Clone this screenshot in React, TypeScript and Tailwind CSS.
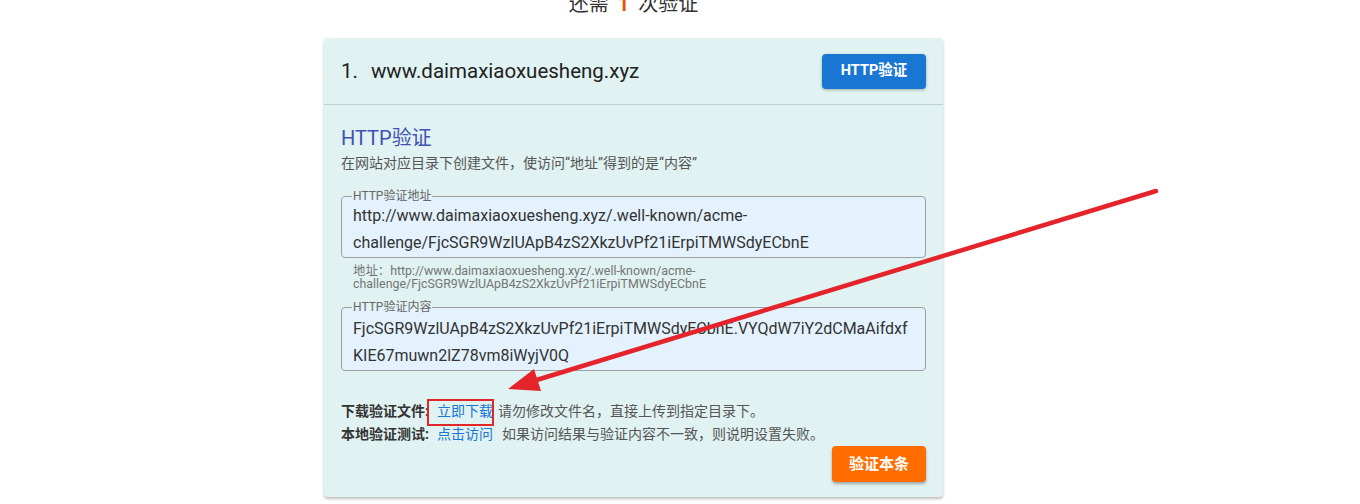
import React from "react";

const font = { fontFamily: 'Roboto, "Noto Sans CJK SC", sans-serif' };

export default function App() {
  return (
    <div className="relative w-[1360px] h-[504px] overflow-hidden bg-white text-[#333]" style={font}>
      <div className="ml-[324px] w-[619px]">
        <div className="flex h-[38px] flex-col">
          <div className="-mt-[8px] text-center text-[20px] leading-[24px] text-[#333]">
            还需 <span className="mx-[4px] font-bold text-[#e65100]">1</span> 次验证
          </div>
        </div>
        <div className="rounded-[4px] bg-[#e0f2f1] shadow-[0_2px_3px_rgba(0,0,0,0.25)]">
          <div className="flex h-[67px] items-center justify-between border-b border-[#b9d1cf] px-[17px]">
            <div className="text-[20.5px] text-[#212121]">
              1.<span className="ml-[13px]">www.daimaxiaoxuesheng.xyz</span>
            </div>
            <button className="h-[35px] w-[104px] rounded-[4px] bg-[#1976d2] text-[14.5px] font-bold text-white shadow-[0_1px_3px_rgba(0,0,0,0.3)]">
              HTTP验证
            </button>
          </div>
          <div className="px-[17px] pt-[20px] pb-[15px]">
            <div className="text-[20px] leading-[26px] text-[#3f51b5]">HTTP验证</div>
            <div className="mt-[3px] text-[14px] leading-[18px] text-[#555]">
              在网站对应目录下创建文件，使访问“地址”得到的是“内容”
            </div>
            <fieldset className="mt-[18px] rounded-[4px] border border-[#9e9e9e] bg-[#e3f2fd] px-[11px] pb-[1px]">
              <legend className="ml-[-1px] px-[1px] text-[12px] leading-[12px] text-[#666]">HTTP验证地址</legend>
              <div className="text-[16px] leading-[27px] text-[#333]">
                http://www.daimaxiaoxuesheng.xyz/.well-known/acme-<br />
                challenge/FjcSGR9WzlUApB4zS2XkzUvPf21iErpiTMWSdyECbnE
              </div>
            </fieldset>
            <div className="mt-[6px] ml-[12px] text-[12.4px] leading-[13px] text-[#757575]">
              地址：http://www.daimaxiaoxuesheng.xyz/.well-known/acme-<br />
              challenge/FjcSGR9WzlUApB4zS2XkzUvPf21iErpiTMWSdyECbnE
            </div>
            <fieldset className="mt-[11px] rounded-[4px] border border-[#9e9e9e] bg-[#e3f2fd] px-[11px] pb-[1px]">
              <legend className="ml-[-1px] px-[1px] text-[12px] leading-[12px] text-[#666]">HTTP验证内容</legend>
              <div className="mt-[2px] text-[16px] leading-[27px] text-[#333]">
                FjcSGR9WzlUApB4zS2XkzUvPf21iErpiTMWSdyECbnE.VYQdW7iY2dCMaAifdxf<br />
                KIE67muwn2lZ78vm8iWyjV0Q
              </div>
            </fieldset>
            <div className="mt-[29px] text-[14px] leading-[23px]">
              <div className="flex items-center">
                <span className="w-[91px] font-bold text-[#333]">下载验证文件:</span>
                <span className="relative ml-[5px] text-[#1976d2]">
                  立即下载
                  <span className="absolute -left-[10px] -right-[1px] -top-[1px] -bottom-[3px] border-2 border-[#e0282a]"></span>
                </span>
                <span className="ml-[5px] text-[#555]">请勿修改文件名，直接上传到指定目录下。</span>
              </div>
              <div className="flex">
                <span className="w-[91px] font-bold text-[#333]">本地验证测试:</span>
                <span className="ml-[5px] text-[#1976d2]">点击访问</span>
                <span className="ml-[9px] text-[#555]">如果访问结果与验证内容不一致，则说明设置失败。</span>
              </div>
            </div>
            <div className="flex justify-end">
              <button className="h-[36px] w-[94px] rounded-[4px] bg-[#ff6d00] text-[15px] font-bold text-white shadow-[0_2px_3px_rgba(0,0,0,0.3)]">
                验证本条
              </button>
            </div>
          </div>
        </div>
      </div>
      <svg className="pointer-events-none absolute left-0 top-0" width="1360" height="504">
        <line x1="1156" y1="191" x2="530" y2="382" stroke="#e5232b" strokeWidth="4.5" strokeLinecap="round" />
        <polygon points="508,389 534,369 541,391" fill="#e5232b" />
      </svg>
    </div>
  );
}
